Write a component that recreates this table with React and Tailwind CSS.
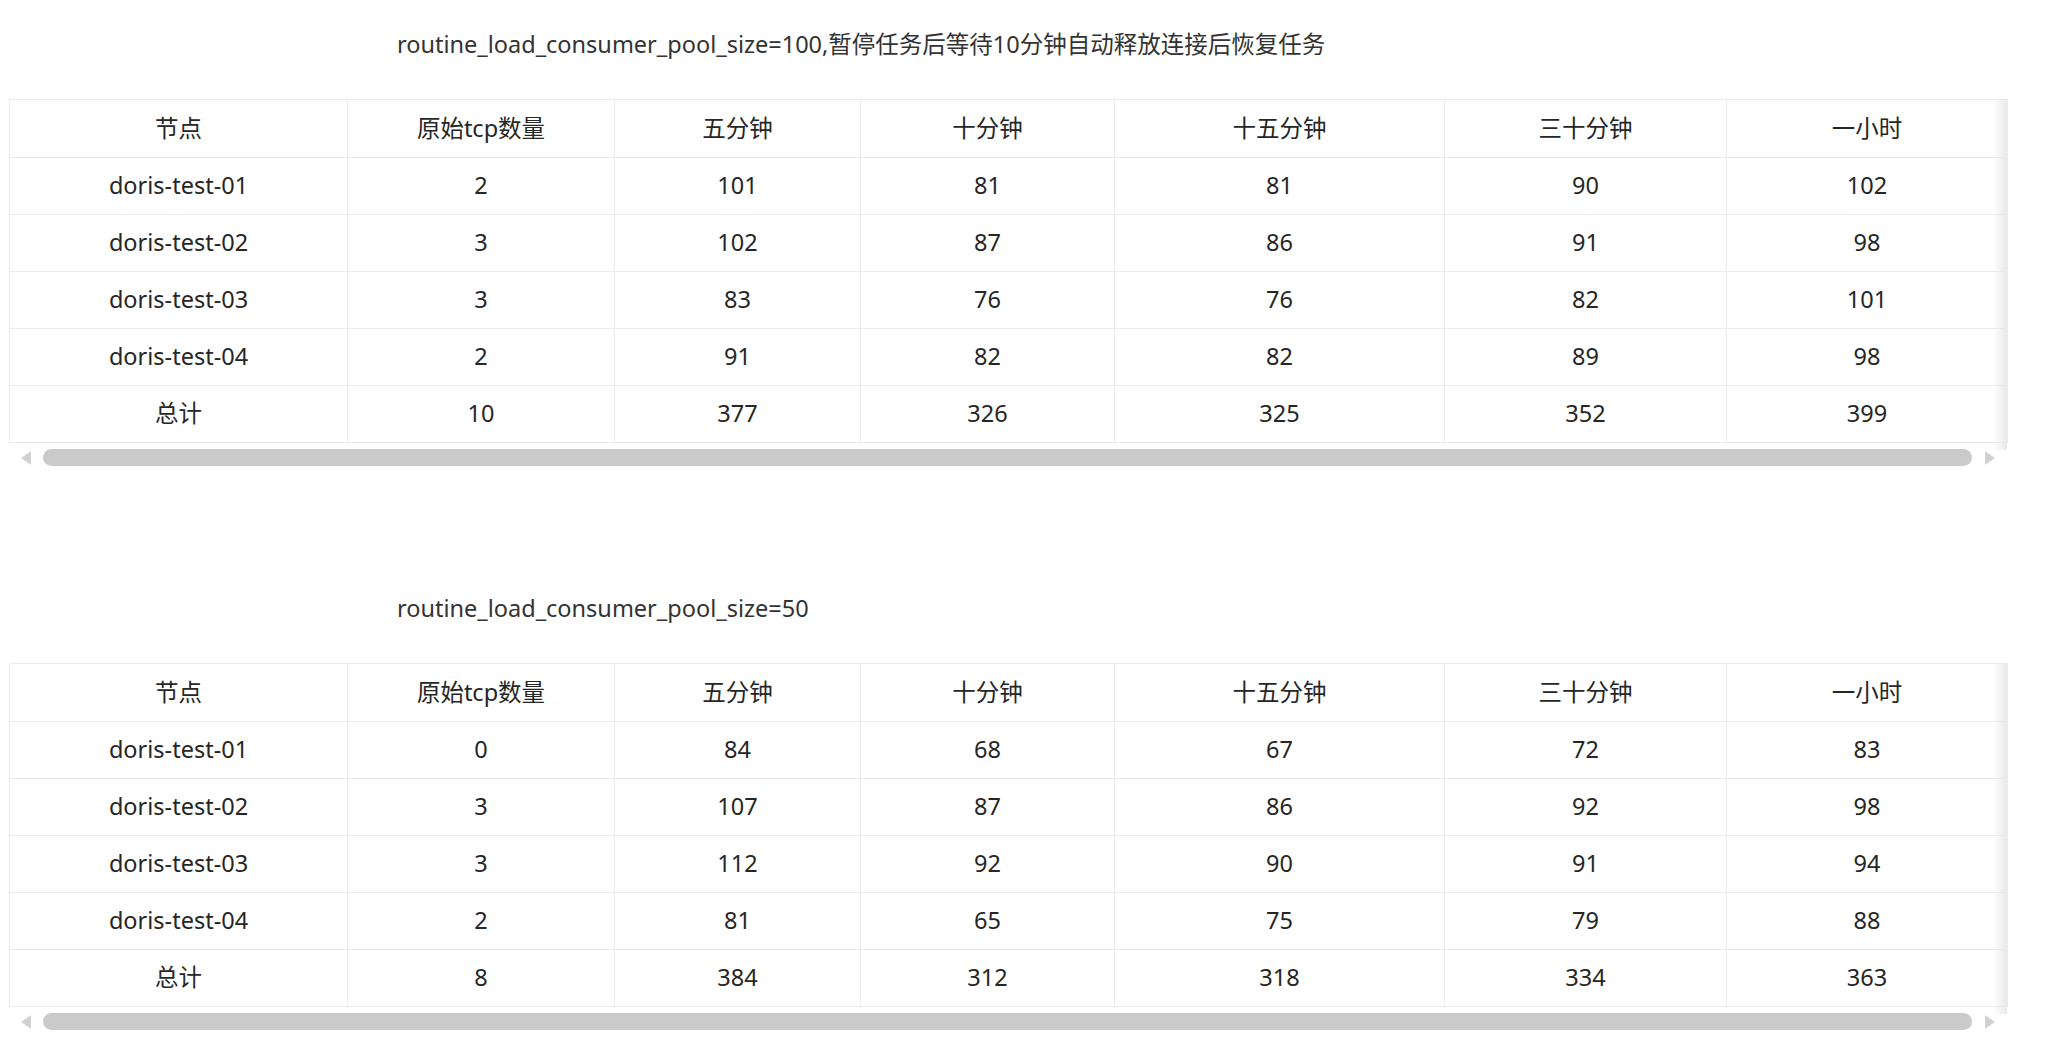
import React from "react";

const headers = ["节点", "原始tcp数量", "五分钟", "十分钟", "十五分钟", "三十分钟", "一小时"];

const colWidths = ["w-[338px]", "w-[267px]", "w-[246px]", "w-[254px]", "w-[330px]", "w-[282px]", "w-[281px]"];

const sections = [
  {
    title: "routine_load_consumer_pool_size=100,暂停任务后等待10分钟自动释放连接后恢复任务",
    rows: [
      ["doris-test-01", "2", "101", "81", "81", "90", "102"],
      ["doris-test-02", "3", "102", "87", "86", "91", "98"],
      ["doris-test-03", "3", "83", "76", "76", "82", "101"],
      ["doris-test-04", "2", "91", "82", "82", "89", "98"],
      ["总计", "10", "377", "326", "325", "352", "399"],
    ],
  },
  {
    title: "routine_load_consumer_pool_size=50",
    rows: [
      ["doris-test-01", "0", "84", "68", "67", "72", "83"],
      ["doris-test-02", "3", "107", "87", "86", "92", "98"],
      ["doris-test-03", "3", "112", "92", "90", "91", "94"],
      ["doris-test-04", "2", "81", "65", "75", "79", "88"],
      ["总计", "8", "384", "312", "318", "334", "363"],
    ],
  },
];

// fake horizontal scrollbar under each table
function ScrollBar() {
  return (
    <div className="flex items-center h-[17px] mt-[6px] px-[12px] w-[1998px]">
      <div className="w-0 h-0 border-y-[7px] border-y-transparent border-r-[10px] border-r-[#d2d2d2]" />
      <div className="ml-[12px] flex-1 h-[17px] rounded-full bg-[#cacaca]" />
      <div className="ml-[13px] w-0 h-0 border-y-[7px] border-y-transparent border-l-[10px] border-l-[#d2d2d2]" />
    </div>
  );
}

function DataTable({ rows }) {
  return (
    <div className="relative w-[1998px]">
      <table className="table-fixed border-collapse w-[1998px] text-[#262626]">
        <colgroup>
          {colWidths.map((w, i) => (
            <col key={i} className={w} />
          ))}
        </colgroup>
        <thead>
          <tr>
            {headers.map((h) => (
              <th key={h} className="h-[58px] border border-[#ebebeb] font-normal text-center p-0 pb-[2px]">
                {h}
              </th>
            ))}
          </tr>
        </thead>
        <tbody>
          {rows.map((row, idx) => (
            <tr key={idx}>
              {row.map((cell, i) => (
                <td key={i} className="h-[57px] border border-[#ebebeb] text-center p-0 pb-[2px]">
                  {cell}
                </td>
              ))}
            </tr>
          ))}
        </tbody>
      </table>
      {/* right edge shadow, more columns hidden */}
      <div className="absolute right-0 top-0 bottom-[-7px] w-[14px] bg-gradient-to-r from-transparent to-[#e9e9e9]" />
    </div>
  );
}

export default function App() {
  return (
    <div className="min-h-screen bg-white pl-[9px] pt-[28px] font-['Noto_Sans','Noto_Sans_CJK_SC',sans-serif] text-[23.5px] leading-[32px]">
      {sections.map((s, i) => (
        <div key={i} className={i > 0 ? "mt-[126px]" : ""}>
          <div className="ml-[388px] text-[#333333]">{s.title}</div>
          <div className="mt-[39px]">
            <DataTable rows={s.rows} />
          </div>
          <ScrollBar />
        </div>
      ))}
    </div>
  );
}
